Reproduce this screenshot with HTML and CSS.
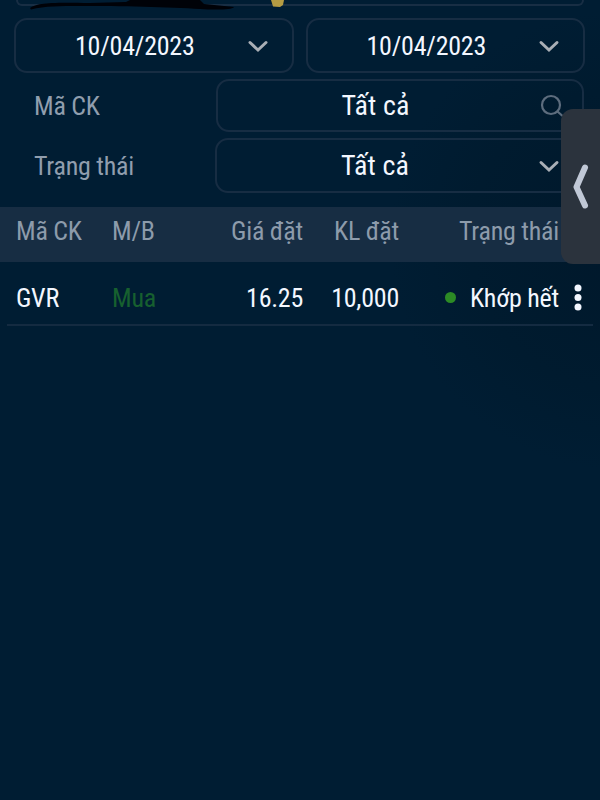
FILE: index.html
```html
<!DOCTYPE html>
<html lang="vi">
<head>
    <meta charset="UTF-8">
    <title>Sổ lệnh</title>
    <link rel="stylesheet" href="styles.css">
</head>
<body>

<div class="container">
    <div class="account-box"></div>
    <svg class="scribble" width="300" height="14" viewBox="0 0 300 14">
        <path d="M30 8 C36 3 50 2 90 3 L126 2 L130 0 L200 0 L204 4 L234 7 C232 10 215 10 200 9 C170 7 120 6 80 6 C60 6 45 6 31 9.500 Z" fill="#000208"/>
        <path d="M271 0 H284 L283 5 L280 7 L273 6.500 Z" fill="#b59c43"/>
    </svg>

    <div class="dates">
        <div class="box">
            <span class="value">10/04/2023</span>
            <svg class="icon" width="22" height="22" viewBox="0 0 22 22"><path d="M3 7.500 L11 15 L19 7.500"/></svg>
        </div>
        <div class="box">
            <span class="value">10/04/2023</span>
            <svg class="icon" width="22" height="22" viewBox="0 0 22 22"><path d="M3 7.500 L11 15 L19 7.500"/></svg>
        </div>
    </div>

    <div class="filter">
        <label>Mã CK</label>
        <div class="box search">
            <span class="value">Tất cả</span>
            <svg class="icon glass" width="24" height="24" viewBox="0 0 24 24"><circle cx="11" cy="11" r="9"/><path d="M17.500 17.500 L22 21.500"/></svg>
        </div>
    </div>
    <div class="filter">
        <label>Trạng thái</label>
        <div class="box status">
            <span class="value">Tất cả</span>
            <svg class="icon" width="22" height="22" viewBox="0 0 22 22"><path d="M3 7.500 L11 15 L19 7.500"/></svg>
        </div>
    </div>

    <div class="row head">
        <span>Mã CK</span>
        <span>M/B</span>
        <span class="right">Giá đặt</span>
        <span class="right">KL đặt</span>
        <span class="right">Trạng thái</span>
    </div>
    <div class="row order">
        <span>GVR</span>
        <span class="buy">Mua</span>
        <span class="right">16.25</span>
        <span class="right">10,000</span>
        <span class="right state"><i class="dot"></i>Khớp hết</span>
        <svg class="more" width="8" height="28" viewBox="0 0 8 28"><circle cx="4" cy="4" r="3.500"/><circle cx="4" cy="13.500" r="3.500"/><circle cx="4" cy="23" r="3.500"/></svg>
    </div>

    <div class="side-tab">
        <svg width="16" height="46" viewBox="0 0 16 46"><path d="M12 3.500 L3.500 23 L12 41.500"/></svg>
    </div>
</div>

</body>
</html>
```

FILE: styles.css
```css
body {
    margin: 0;
    background-color: #001d33;
    font-family: "Roboto Condensed", Roboto, sans-serif;
    font-stretch: 75%;
    font-size: 26px;
    letter-spacing: -0.25px;
    line-height: 30px;
    color: #f3f7ff;
}
.container {
    position: relative;
    height: 800px;
    overflow: hidden;
    background: radial-gradient(circle at 620px 240px, #00182b 0, #001b2f 150px, #001d33 230px);
}
.account-box {
    height: 6px;
    margin: 0 16px 12px;
    border: 2px solid #182e44;
    border-top: none;
    border-radius: 0 0 12px 12px;
    box-sizing: border-box;
}
.scribble {
    position: absolute;
    left: 0;
    top: 0;
}
.dates {
    display: flex;
    gap: 12px;
    padding: 0 15px 0 14px;
}
.box {
    display: flex;
    align-items: center;
    justify-content: center;
    position: relative;
    flex: 1;
    height: 55px;
    box-sizing: border-box;
    border: 2px solid #172d43;
    border-radius: 13px;
}
.dates .value {
    margin-right: 38px;
}
.icon {
    position: absolute;
    right: 23px;
    fill: none;
    stroke: #a9afb6;
    stroke-width: 3;
    stroke-linecap: round;
}
.glass {
    right: 18px;
    stroke: #5d6d7e;
    stroke-width: 2.2;
}
.filter {
    display: flex;
    align-items: center;
    padding: 0 16px 0 34px;
    margin-top: 6px;
    color: #909eae;
}
.filter label {
    width: 181px;
}
.filter .value {
    color: #f3f7ff;
    margin-right: 49px;
    padding-top: 1px;
    font-size: 28px;
    letter-spacing: 0.1px;
}
.search {
    height: 53px;
    margin-left: 1px;
}
.status .icon {
    right: 22px;
}
.row {
    display: grid;
    grid-template-columns: 96px 88px 103px 96px 160px 38px;
    align-items: center;
    padding-left: 16px;
}
.right {
    text-align: right;
}
.head {
    height: 55px;
    margin-top: 14px;
    padding-bottom: 7px;
    box-sizing: border-box;
    background-color: #172d43;
    color: #8d9bab;
}
.order {
    height: 64px;
    margin: 0 7px;
    padding: 9px 0 0 9px;
    box-sizing: border-box;
    border-bottom: 2px solid #142b41;
}
.buy {
    color: #17602f;
}
.dot {
    display: inline-block;
    width: 11px;
    height: 11px;
    margin-right: 14px;
    border-radius: 50%;
    background-color: #2c8b25;
    vertical-align: 4px;
}
.more {
    justify-self: center;
    fill: #f3f7ff;
}
.side-tab {
    position: absolute;
    top: 109px;
    right: 0;
    width: 39px;
    height: 155px;
    display: flex;
    align-items: center;
    justify-content: center;
    border-radius: 12px 0 0 12px;
    background-color: #2b333d;
}
.side-tab svg {
    fill: none;
    stroke: #c0c8d6;
    stroke-width: 6;
    stroke-linecap: round;
    stroke-linejoin: round;
}
```
